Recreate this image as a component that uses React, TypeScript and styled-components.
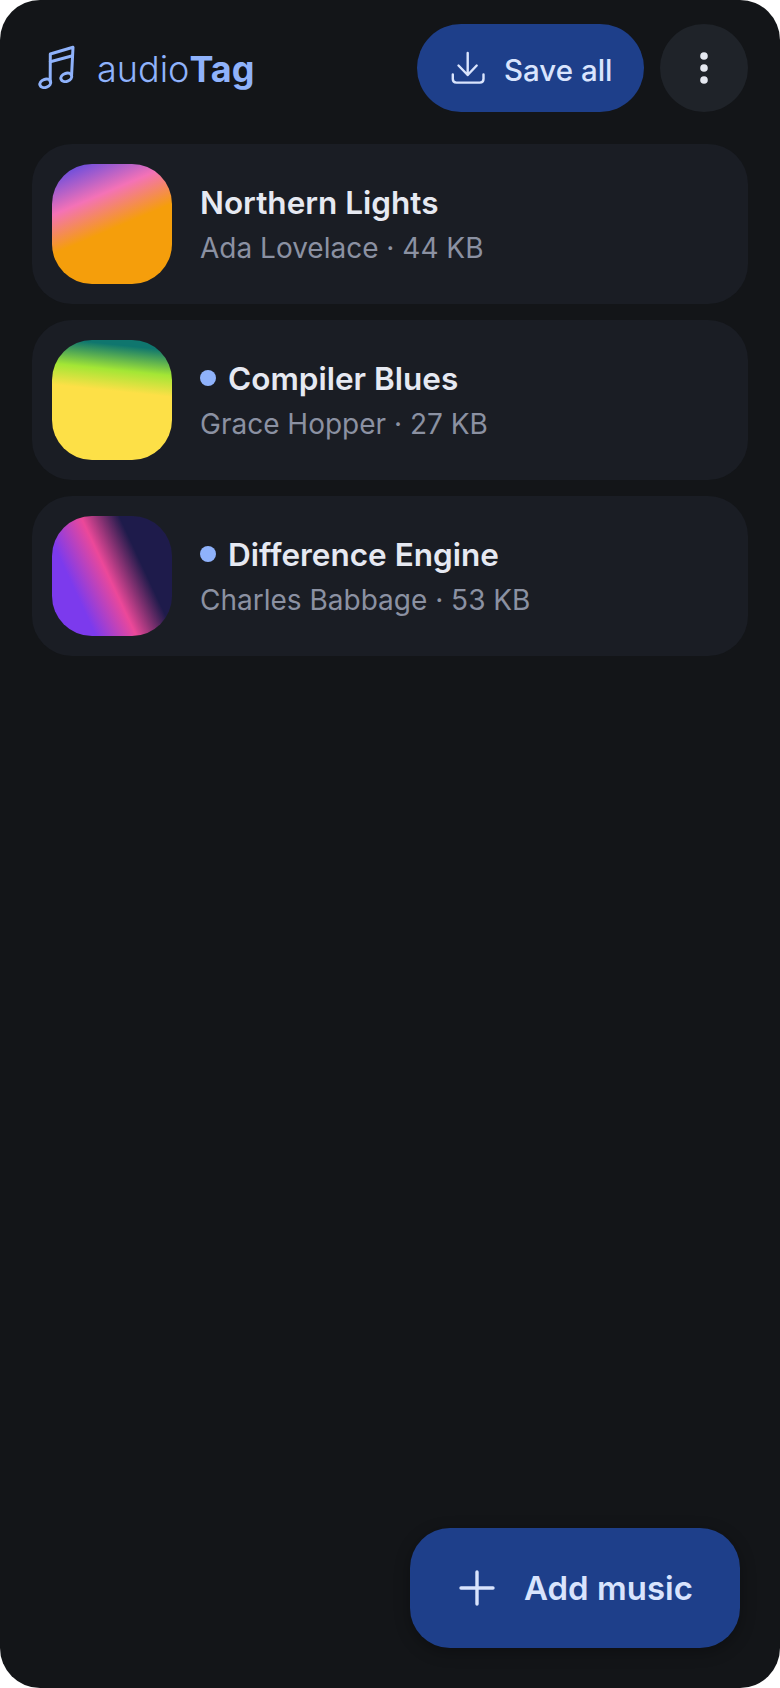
import styled, { createGlobalStyle } from 'styled-components';

const GlobalStyle = createGlobalStyle`
  html, body {
    margin: 0;
    padding: 0;
    background: #fff;
  }
  * {
    box-sizing: border-box;
  }
`;

const Screen = styled.div`
  position: relative;
  width: 780px;
  height: 1688px;
  padding: 24px 32px;
  border-radius: 40px;
  background: #131518;
  font-family: Inter, 'Noto Sans', sans-serif;
  overflow: hidden;
`;

const Header = styled.header`
  display: flex;
  align-items: center;
  height: 88px;
  margin-bottom: 32px;
`;

const Brand = styled.div`
  display: flex;
  align-items: center;
  gap: 20px;
  flex: 1;
  padding-left: 5px;
  color: #8fb2fb;
`;

const BrandName = styled.div`
  margin-top: 2px;
  font-size: 36px;
  font-weight: 300;
  b {
    font-weight: 700;
  }
`;

const SaveButton = styled.button`
  display: flex;
  align-items: center;
  gap: 19px;
  width: 227px;
  height: 88px;
  padding: 0 0 0 34px;
  border: 0;
  border-radius: 44px;
  background: #1e3f8a;
  color: #d9e4fd;
  font: 500 29.5px Inter, sans-serif;
`;

const ButtonLabel = styled.span`
  margin-top: 3px;
`;

const MenuButton = styled.button`
  display: flex;
  align-items: center;
  justify-content: center;
  width: 88px;
  height: 88px;
  margin-left: 16px;
  padding: 0;
  border: 0;
  border-radius: 50%;
  background: #1f2329;
  color: #e5e8f0;
`;

const TrackList = styled.div`
  display: flex;
  flex-direction: column;
  gap: 16px;
`;

const TrackCard = styled.div`
  display: flex;
  align-items: center;
  gap: 28px;
  height: 160px;
  padding: 20px;
  border-radius: 40px;
  background: #1a1d24;
`;

const Artwork = styled.div<{ $gradient: string }>`
  width: 120px;
  height: 120px;
  flex: none;
  border-radius: 40px;
  background: ${(p) => p.$gradient};
`;

const TrackInfo = styled.div`
  display: flex;
  flex-direction: column;
  gap: 8px;
  padding-top: 2px;
`;

const TitleRow = styled.div`
  display: flex;
  align-items: center;
  gap: 12px;
`;

const UnsavedDot = styled.span`
  width: 16px;
  height: 16px;
  margin-top: -2px;
  border-radius: 50%;
  background: #8fb2fb;
`;

const TrackTitle = styled.div`
  color: #e6e9f2;
  font-size: 31.5px;
  font-weight: 560;
  line-height: 38px;
`;

const TrackMeta = styled.div`
  color: #8b91a2;
  font-size: 28px;
  font-weight: 400;
  line-height: 36px;
`;

const AddButton = styled.button`
  position: absolute;
  right: 40px;
  bottom: 40px;
  display: flex;
  align-items: center;
  gap: 29px;
  width: 330px;
  height: 120px;
  padding: 0 0 0 49px;
  border: 0;
  border-radius: 40px;
  background: #1e3f8a;
  color: #d9e4fd;
  font: 600 33px Inter, sans-serif;
  box-shadow: 0 4px 16px rgba(0, 0, 0, 0.3);
`;

const tracks = [
  {
    title: 'Northern Lights',
    meta: 'Ada Lovelace · 44 KB',
    unsaved: false,
    gradient: 'linear-gradient(157deg, #4f46e5 2%, #f472b6 30%, #f59e0b 53%)',
  },
  {
    title: 'Compiler Blues',
    meta: 'Grace Hopper · 27 KB',
    unsaved: true,
    gradient: 'linear-gradient(186deg, #0f766e 8%, #a3e635 27%, #fde047 43%)',
  },
  {
    title: 'Difference Engine',
    meta: 'Charles Babbage · 53 KB',
    unsaved: true,
    gradient: 'linear-gradient(65deg, #7c3aed 25%, #ec4899 48%, #1e1b4b 70%)',
  },
];

export default function App() {
  return (
    <>
      <GlobalStyle />
      <Screen>
        <Header>
          <Brand>
            <svg width="40" height="50" viewBox="0 0 40 50" fill="none" stroke="currentColor" strokeWidth="3" strokeLinejoin="round" strokeLinecap="round">
              <path d="M13.2 38.5 L13.3 11 L36 4.3 L34.6 32" />
              <path d="M13.3 18.7 L35.6 12.7" />
              <ellipse cx="8.3" cy="40.3" rx="5.6" ry="4" transform="rotate(-20 8.3 40.3)" />
              <ellipse cx="29.3" cy="34.3" rx="5.6" ry="4" transform="rotate(-20 29.3 34.3)" />
            </svg>
            <BrandName>
              audio<b>Tag</b>
            </BrandName>
          </Brand>
          <SaveButton>
            <svg width="34" height="34" viewBox="0 0 34 34" fill="none" stroke="currentColor" strokeWidth="2.4" strokeLinecap="round" strokeLinejoin="round">
              <path d="M16.7 2 V24 M7.5 14.5 L16.7 24 L25.7 14.5" />
              <path d="M1.8 23.5 V28 Q1.8 31.6 5.4 31.6 H28.9 Q32.5 31.6 32.5 28 V23.5" />
            </svg>
            <ButtonLabel>Save all</ButtonLabel>
          </SaveButton>
          <MenuButton>
            <svg width="8" height="32" viewBox="0 0 8 32" fill="currentColor">
              <circle cx="4" cy="4" r="3.8" />
              <circle cx="4" cy="16" r="3.8" />
              <circle cx="4" cy="28" r="3.8" />
            </svg>
          </MenuButton>
        </Header>
        <TrackList>
          {tracks.map((track) => (
            <TrackCard key={track.title}>
              <Artwork $gradient={track.gradient} />
              <TrackInfo>
                <TitleRow>
                  {track.unsaved && <UnsavedDot />}
                  <TrackTitle>{track.title}</TrackTitle>
                </TitleRow>
                <TrackMeta>{track.meta}</TrackMeta>
              </TrackInfo>
            </TrackCard>
          ))}
        </TrackList>
        <AddButton>
          <svg width="36" height="36" viewBox="0 0 36 36" fill="none" stroke="currentColor" strokeWidth="3.4" strokeLinecap="round">
            <path d="M18 2 V34 M2 18 H34" />
          </svg>
          Add music
        </AddButton>
      </Screen>
    </>
  );
}
